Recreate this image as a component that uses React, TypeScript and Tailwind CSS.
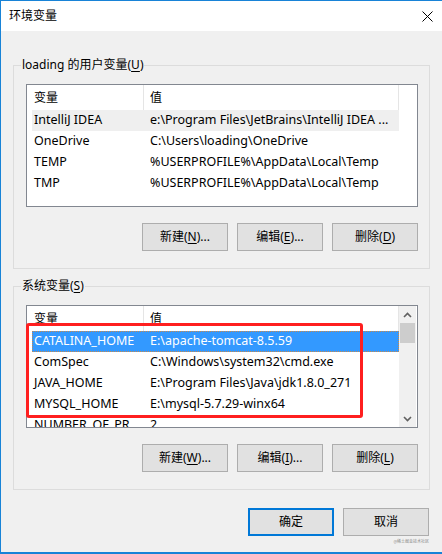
import React from "react";

const userVars = [
  { name: "IntelliJ IDEA", value: "e:\\Program Files\\JetBrains\\IntelliJ IDEA ...", hover: true },
  { name: "OneDrive", value: "C:\\Users\\loading\\OneDrive" },
  { name: "TEMP", value: "%USERPROFILE%\\AppData\\Local\\Temp" },
  { name: "TMP", value: "%USERPROFILE%\\AppData\\Local\\Temp" },
];

const sysVars = [
  { name: "CATALINA_HOME", value: "E:\\apache-tomcat-8.5.59", selected: true },
  { name: "ComSpec", value: "C:\\Windows\\system32\\cmd.exe" },
  { name: "JAVA_HOME", value: "E:\\Program Files\\Java\\jdk1.8.0_271" },
  { name: "MYSQL_HOME", value: "E:\\mysql-5.7.29-winx64" },
  { name: "NUMBER_OF_PR", value: "2" },
];

const Btn = ({ label, hot, tail = "", primary = false }: { label: string; hot?: string; tail?: string; primary?: boolean }) => (
  <button
    className={`w-[86px] h-[28px] bg-[#e1e1e1] text-[12px] text-black flex items-center justify-center ${
      primary ? "border-2 border-[#0078d7]" : "border border-[#adadad]"
    }`}
  >
    {label}
    {hot && (
      <>
        (<span className="underline underline-offset-[2px]">{hot}</span>)
      </>
    )}
    {tail}
  </button>
);

const Header = () => (
  <div className="flex h-[25px] items-center bg-white">
    <div className="w-[117px] h-full border-r border-[#e5e5e5] pl-[7px] flex items-center">变量</div>
    <div className="w-[255px] h-full border-r border-[#e5e5e5] pl-[6px] flex items-center">值</div>
  </div>
);

const Row = ({ v }: { v: { name: string; value: string; hover?: boolean; selected?: boolean } }) => (
  <div
    className={`ml-[5px] w-[367px] h-[21px] flex items-center whitespace-nowrap text-[12.5px] ${
      v.selected ? "bg-[#3399ff] text-white outline outline-1 outline-dotted outline-offset-[-1px] outline-[#c8894a]" : v.hover ? "bg-[#efefef]" : ""
    }`}
  >
    <div className="w-[112px] pl-[2px]">{v.name}</div>
    <div className="pl-[6px]">{v.value}</div>
  </div>
);

const Chevron = ({ up }: { up?: boolean }) => (
  <svg width="9" height="6" viewBox="0 0 9 6">
    <polyline
      points={up ? "1,5 4.5,1.5 8,5" : "1,1 4.5,4.5 8,1"}
      fill="none"
      stroke="#606060"
      strokeWidth="1.6"
    />
  </svg>
);

export default function App() {
  return (
    <div className="w-[442px] h-[554px] flex flex-col border-l border-t border-b-2 border-[#1883d7] bg-[#f0f0f0] text-[12px] text-black font-['Segoe_UI','Noto_Sans','Noto_Sans_CJK_SC',sans-serif]">
      <div className="h-[30px] bg-white flex items-center justify-between pl-[8px] pr-[9px]">
        <span className="text-[12px]">环境变量</span>
        <svg width="11" height="11" viewBox="0 0 11 11">
          <path d="M0.5 0.5 L10.5 10.5 M10.5 0.5 L0.5 10.5" stroke="#000" strokeWidth="1" />
        </svg>
      </div>

      <div className="flex-1 flex flex-col pl-[12px]">
        <fieldset className="mt-[26px] w-[417px] border border-[#dcdcdc] pl-[12px] pr-[11px] pt-[11px] pb-[17px]">
          <legend className="ml-[-5px] px-[1px] leading-[16px]">
            loading 的用户变量(<span className="underline underline-offset-[2px]">U</span>)
          </legend>
          <div className="h-[123px] border border-[#828790] bg-white overflow-hidden">
            <Header />
            {userVars.map((v) => (
              <Row key={v.name} v={v} />
            ))}
          </div>
          <div className="mt-[16px] flex justify-end gap-[9px]">
            <Btn label="新建" hot="N" tail="..." />
            <Btn label="编辑" hot="E" tail="..." />
            <Btn label="删除" hot="D" />
          </div>
        </fieldset>

        <fieldset className="mt-[9px] w-[417px] border border-[#dcdcdc] pl-[12px] pr-[11px] pt-[11px] pb-[17px]">
          <legend className="ml-[-5px] px-[1px] leading-[16px]">
            系统变量(<span className="underline underline-offset-[2px]">S</span>)
          </legend>
          <div className="relative h-[123px] border border-[#828790] bg-white">
            <div className="flex h-full overflow-hidden">
              <div className="w-[372px] overflow-hidden">
                <Header />
                {sysVars.map((v) => (
                  <Row key={v.name} v={v} />
                ))}
              </div>
              <div className="w-[17px] flex flex-col bg-[#f0f0f0]">
                <div className="h-[17px] flex items-center justify-center">
                  <Chevron up />
                </div>
                <div className="mx-[1px] h-[20px] bg-[#cdcdcd]" />
                <div className="flex-1" />
                <div className="h-[17px] flex items-center justify-center">
                  <Chevron />
                </div>
              </div>
            </div>
            <div className="absolute left-[-1px] top-[17px] w-[337px] h-[95px] border-[3px] border-[#ff1f1f] rounded-[3px]" />
          </div>
          <div className="mt-[16px] flex justify-end gap-[9px]">
            <Btn label="新建" hot="W" tail="..." />
            <Btn label="编辑" hot="I" tail="..." />
            <Btn label="删除" hot="L" />
          </div>
        </fieldset>

        <div className="mt-[18px] pr-[13px] flex justify-end gap-[9px]">
          <Btn label="确定" primary />
          <Btn label="取消" />
        </div>
        <div className="pr-[13px] mt-[3px] flex justify-end text-[4px] leading-[5px] text-[#8a8a8a]">@稀土掘金技术社区</div>
      </div>
    </div>
  );
}
